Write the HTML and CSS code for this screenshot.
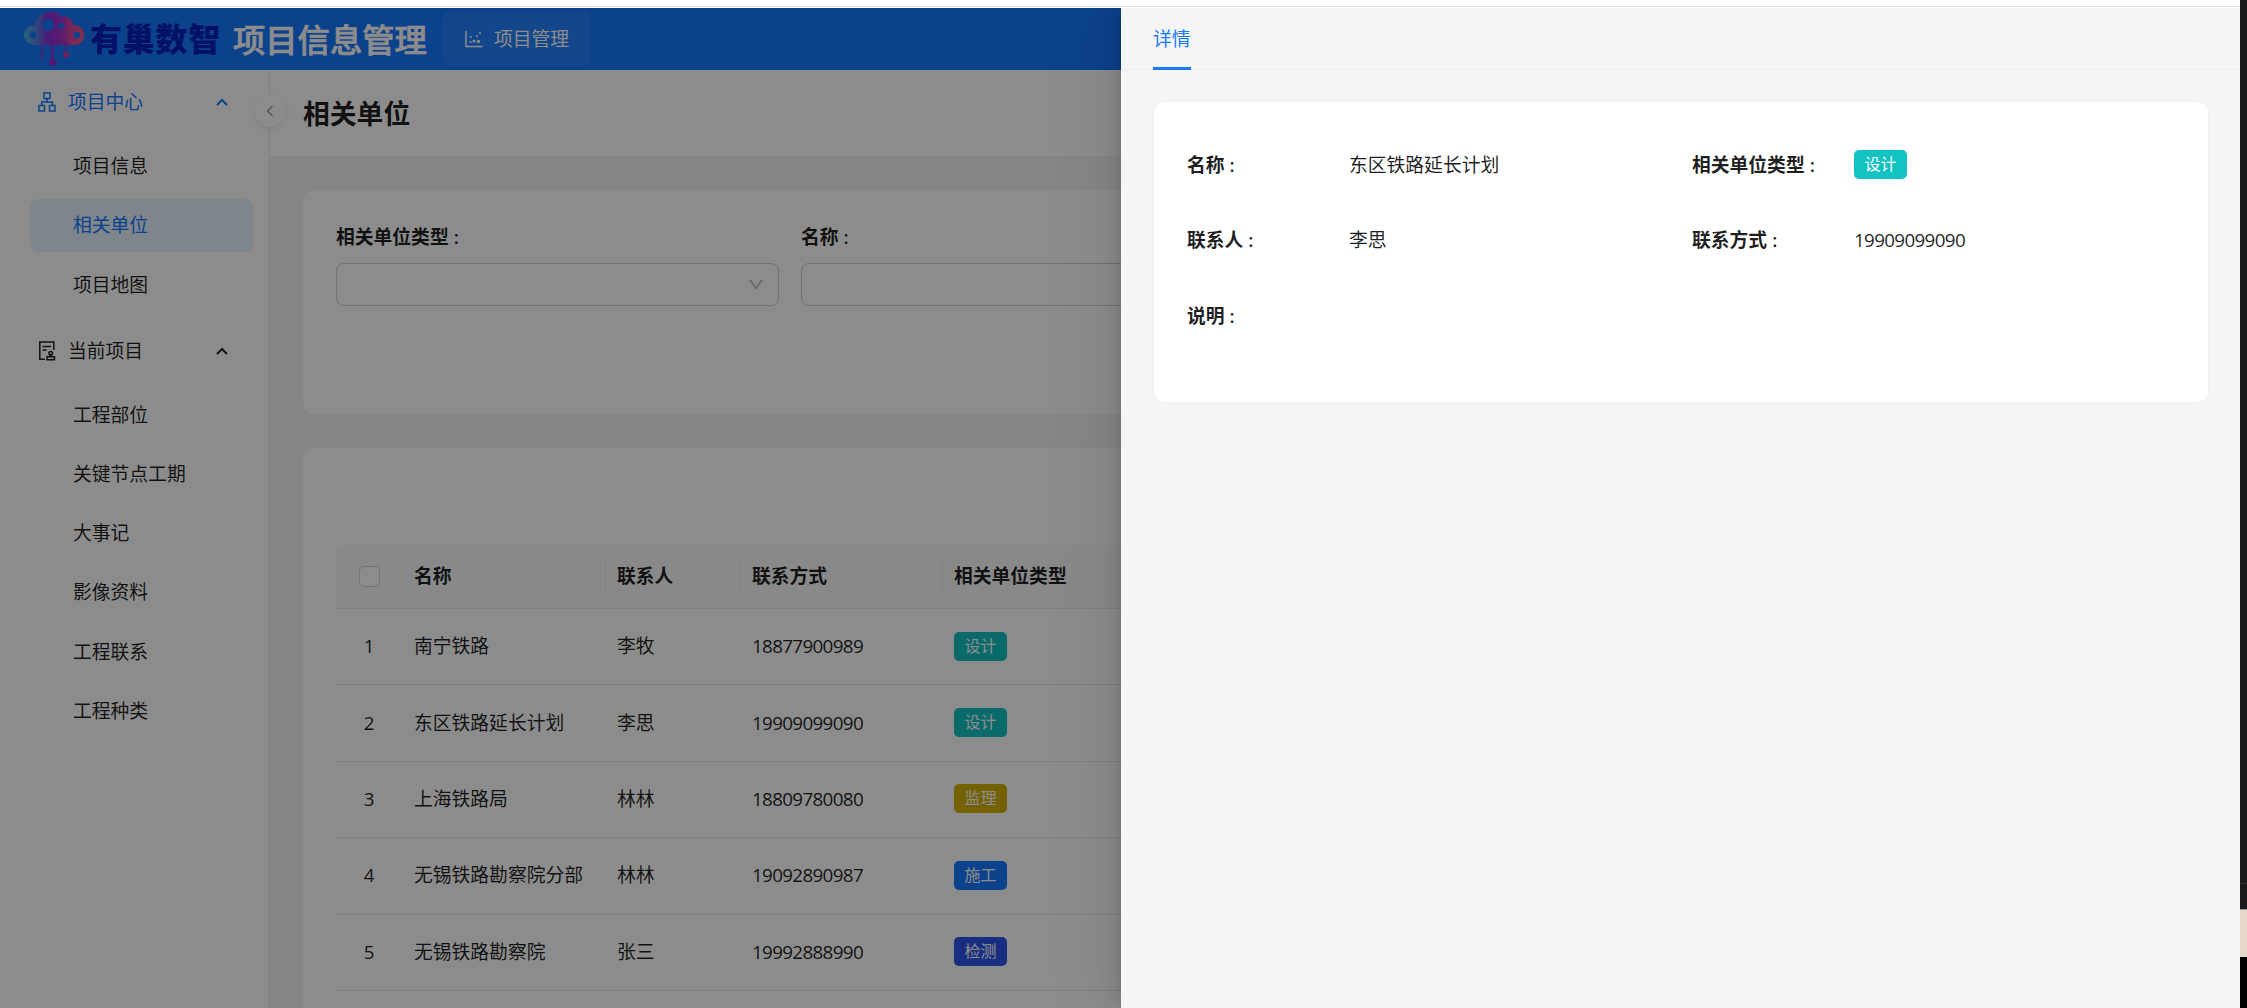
FILE: index.html
```html
<!DOCTYPE html>
<html lang="zh-CN">
<head>
    <meta charset="UTF-8">
    <meta name="viewport" content="width=device-width, initial-scale=1.0">
    <title>项目信息管理</title>
    <link rel="stylesheet" href="styles.css">
</head>
<body>
    <div class="screen">
        <div class="top-strip"></div>
        <div class="app">
            <header class="header">
                <svg class="logo" viewBox="0 0 60 54">
                    <defs>
                        <linearGradient id="cloud" x1="0" x2="1" y1="0" y2="0">
                            <stop offset="0" stop-color="#45b4e0"/>
                            <stop offset="0.22" stop-color="#5a80e0"/>
                            <stop offset="0.4" stop-color="#8a30d8"/>
                            <stop offset="0.62" stop-color="#a832cc"/>
                            <stop offset="0.8" stop-color="#dc48a4"/>
                            <stop offset="1" stop-color="#ff5578"/>
                        </linearGradient>
                    </defs>
                    <path fill="url(#cloud)" fill-rule="evenodd" d="M11 13C13 5 18 0 26 0c6 0 10 2 12 5 5-2 10 1 11 8 6 0 11 4 11 10s-4 10-10 10H11C5 33 0 29 0 23s5-10 11-10zM24 7a6 6 0 1 0 .1 0zM37 11a3 3 0 1 0 .1 0zM9 19.500a3.500 3.500 0 1 0 .1 0zM53 19.500a3.500 3.500 0 1 0 .1 0z"/>
                    <path stroke="#9430cc" stroke-width="1.500" fill="none" d="M18 32v14M42 30v12"/>
                    <path stroke="#9430cc" stroke-width="2.500" fill="none" d="M28.500 30v19"/>
                    <circle cx="18" cy="46" r="1.500" fill="#7a45c8"/>
                    <circle cx="28.500" cy="50.500" r="3.500" fill="#9c28cc"/>
                    <circle cx="42" cy="43" r="3" fill="#cc40a4"/>
                </svg>
                <span class="brand">有巢数智</span>
                <h1 class="app-title">项目信息管理</h1>
                <a class="nav-item">
                    <svg class="nav-icon" viewBox="0 0 18 18">
                        <path d="M1 1v15.500h16.500" fill="none" stroke="#fff" stroke-width="1.500"/>
                        <g fill="#fff">
                            <circle cx="6" cy="7" r="1"/><circle cx="12" cy="6" r="1"/><circle cx="15" cy="3" r="1"/>
                            <circle cx="5.500" cy="12" r="1"/><circle cx="9" cy="11" r="1.500"/><circle cx="13.500" cy="11.500" r="1.700"/>
                        </g>
                    </svg>
                    项目管理
                </a>
            </header>

            <div class="layout">
                <aside class="sidebar">
                    <div class="menu-title active">
                        <svg class="menu-icon" viewBox="0 0 18 20" fill="none" stroke="currentColor" stroke-width="1.500">
                            <path d="M6 1h6v5.500H6zM1 13.500h5.500V19H1zM11.500 13.500H17V19h-5.500zM9 6.500V10M3.700 13.500V10h10.600v3.500"/>
                        </svg>
                        <span>项目中心</span>
                        <svg class="arrow" viewBox="0 0 12 8"><path d="M1 7l5-5 5 5" fill="none" stroke="currentColor" stroke-width="2"/></svg>
                    </div>
                    <ul class="menu">
                        <li>项目信息</li>
                        <li class="selected">相关单位</li>
                        <li>项目地图</li>
                    </ul>
                    <div class="menu-title">
                        <svg class="menu-icon" viewBox="0 0 18 20" fill="none" stroke="currentColor" stroke-width="1.500">
                            <path d="M7 18.300H1.800V1h14v8M4.500 5.500h8.500M4.500 9h4"/>
                            <circle cx="12.700" cy="12.200" r="1.800"/>
                            <path d="M12.700 14v1.500M9 15.700h7.500v3H9z"/>
                        </svg>
                        <span>当前项目</span>
                        <svg class="arrow" viewBox="0 0 12 8"><path d="M1 7l5-5 5 5" fill="none" stroke="currentColor" stroke-width="2"/></svg>
                    </div>
                    <ul class="menu">
                        <li>工程部位</li>
                        <li>关键节点工期</li>
                        <li>大事记</li>
                        <li>影像资料</li>
                        <li>工程联系</li>
                        <li>工程种类</li>
                    </ul>
                    <div class="collapse">
                        <svg viewBox="0 0 8 12"><path d="M6.500 1L1.500 6l5 5" fill="none" stroke="#999" stroke-width="1.500"/></svg>
                    </div>
                </aside>

                <main class="main">
                    <div class="page-header"><h2>相关单位</h2></div>
                    <div class="content">
                        <section class="card search">
                            <div class="field">
                                <label>相关单位类型<i>:</i></label>
                                <div class="input">
                                    <svg viewBox="0 0 14 11"><path d="M1 1L7 9.500 13 1" fill="none" stroke="#b8b8b8" stroke-width="1.400"/></svg>
                                </div>
                            </div>
                            <div class="field">
                                <label>名称<i>:</i></label>
                                <div class="input"></div>
                            </div>
                            <div class="field"></div>
                            <div class="field"></div>
                        </section>

                        <section class="card list">
                            <div class="table">
                                <div class="row head">
                                    <div class="cell"><span class="checkbox"></span></div>
                                    <div class="cell">名称</div>
                                    <div class="cell">联系人</div>
                                    <div class="cell">联系方式</div>
                                    <div class="cell">相关单位类型</div>
                                </div>
                                <div class="row">
                                    <div class="cell">1</div>
                                    <div class="cell">南宁铁路</div>
                                    <div class="cell">李牧</div>
                                    <div class="cell num">18877900989</div>
                                    <div class="cell"><span class="tag cyan">设计</span></div>
                                </div>
                                <div class="row">
                                    <div class="cell">2</div>
                                    <div class="cell">东区铁路延长计划</div>
                                    <div class="cell">李思</div>
                                    <div class="cell num">19909099090</div>
                                    <div class="cell"><span class="tag cyan">设计</span></div>
                                </div>
                                <div class="row">
                                    <div class="cell">3</div>
                                    <div class="cell">上海铁路局</div>
                                    <div class="cell">林林</div>
                                    <div class="cell num">18809780080</div>
                                    <div class="cell"><span class="tag gold">监理</span></div>
                                </div>
                                <div class="row">
                                    <div class="cell">4</div>
                                    <div class="cell">无锡铁路勘察院分部</div>
                                    <div class="cell">林林</div>
                                    <div class="cell num">19092890987</div>
                                    <div class="cell"><span class="tag blue">施工</span></div>
                                </div>
                                <div class="row">
                                    <div class="cell">5</div>
                                    <div class="cell">无锡铁路勘察院</div>
                                    <div class="cell">张三</div>
                                    <div class="cell num">19992888990</div>
                                    <div class="cell"><span class="tag geekblue">检测</span></div>
                                </div>
                            </div>
                        </section>
                    </div>
                </main>
            </div>

            <div class="mask"></div>
            <div class="drawer">
                <div class="tabs"><div class="tab">详情</div></div>
                <div class="detail">
                    <div class="item"><label>名称<i>:</i></label><span>东区铁路延长计划</span></div>
                    <div class="item"><label>相关单位类型<i>:</i></label><span class="tag cyan">设计</span></div>
                    <div class="item"><label>联系人<i>:</i></label><span>李思</span></div>
                    <div class="item"><label>联系方式<i>:</i></label><span class="num">19909099090</span></div>
                    <div class="item"><label>说明<i>:</i></label><span></span></div>
                </div>
            </div>
        </div>
    </div>
    <div class="edge">
        <div class="edge-dark"></div>
        <div class="edge-mid"></div>
        <div class="edge-light"></div>
    </div>
</body>
</html>
```

FILE: styles.css
```css
* {
    margin: 0;
    padding: 0;
    box-sizing: border-box;
}

body {
    display: flex;
    height: 100vh;
    overflow: hidden;
    font-family: "Open Sans", "Noto Sans CJK SC", sans-serif;
    font-size: 18.8px;
    line-height: 30px;
    color: rgba(0, 0, 0, 0.88);
    background: #fff;
}

ul {
    list-style: none;
}

i {
    font-style: normal;
    margin-left: 5px;
}

.screen {
    flex: 1;
    display: flex;
    flex-direction: column;
}

.top-strip {
    height: 8px;
    flex: none;
    background: linear-gradient(#fff 6px, #e0e0e0 6px, #e0e0e0 7px, #fff 7px);
}

.app {
    flex: 1;
    position: relative;
    overflow: hidden;
    display: flex;
    flex-direction: column;
}

/* header */
.header {
    height: 62px;
    flex: none;
    display: flex;
    align-items: center;
    padding-left: 24px;
    background: #1677ff;
    color: #fff;
}

.logo {
    width: 60px;
    height: 54px;
    margin-right: 6px;
}

.brand {
    width: 143px;
    font-size: 32px;
    font-weight: 900;
    letter-spacing: 0.8px;
    color: #0420b8;
    white-space: nowrap;
}

.app-title {
    width: 210px;
    font-size: 32.3px;
    font-weight: 500;
    -webkit-text-stroke: 0.7px #fff;
    white-space: nowrap;
}

.nav-item {
    width: 148px;
    height: 54px;
    display: flex;
    align-items: center;
    padding-left: 22px;
    gap: 11px;
    border-radius: 6px;
    background: rgba(255, 255, 255, 0.07);
    white-space: nowrap;
}

.nav-icon {
    width: 18px;
    height: 18px;
}

/* sidebar */
.layout {
    flex: 1;
    min-height: 0;
    display: flex;
}

.sidebar {
    position: relative;
    width: 270px;
    flex: none;
    padding: 3px 16px 0 30px;
    border-right: 1px solid #ececec;
    background: #fff;
}

.menu-title {
    height: 58px;
    display: flex;
    align-items: center;
    padding: 0 25px 0 8px;
}

.menu-title.active {
    color: #1677ff;
}

.menu-icon {
    width: 18px;
    height: 20px;
    margin-right: 12px;
}

.arrow {
    width: 12px;
    height: 8px;
    margin-left: auto;
}

.menu {
    display: flex;
    flex-direction: column;
    gap: 6.3px;
    padding: 9px 0 10px;
}

.menu li {
    height: 53px;
    padding-left: 43px;
    line-height: 53px;
    border-radius: 9px;
}

.menu .selected {
    background: #e6f4ff;
    color: #1677ff;
}

.collapse {
    position: absolute;
    top: 25px;
    right: -17px;
    width: 32px;
    height: 32px;
    display: flex;
    align-items: center;
    justify-content: center;
    border-radius: 50%;
    background: #fff;
    box-shadow: 0 2px 8px rgba(0, 0, 0, 0.05), 0 1px 2px rgba(0, 0, 0, 0.05);
}

.collapse svg {
    width: 8px;
    height: 12px;
}

/* main area */
.main {
    flex: 1;
    background: #f5f5f5;
}

.page-header {
    height: 86px;
    display: flex;
    align-items: center;
    padding: 2px 0 0 33px;
    background: #fff;
}

.page-header h2 {
    font-size: 26.8px;
    font-weight: 600;
}

.content {
    padding: 34px 33px 0;
}

.card {
    border-radius: 10px;
    background: #fff;
    box-shadow: 0 0 2px rgba(0, 0, 0, 0.06);
}

.search {
    height: 224px;
    display: grid;
    grid-template-columns: repeat(4, 443px);
    column-gap: 22px;
    padding: 32px 33px 0;
    overflow: hidden;
}

.field label {
    display: block;
    height: 41px;
    font-weight: 600;
}

.input {
    height: 43px;
    display: flex;
    align-items: center;
    justify-content: flex-end;
    padding-right: 15px;
    border: 1px solid #d0d0d0;
    border-radius: 8px;
}

.input svg {
    width: 14px;
    height: 11px;
}

.list {
    height: 700px;
    margin-top: 34px;
    padding: 97px 33px 0;
}

.row {
    display: grid;
    grid-template-columns: 66px 203px 135px 202px 1fr;
    align-items: center;
    height: 76.4px;
    padding-bottom: 1px;
    border-bottom: 1px solid #e8e8e8;
}

.row.head {
    height: 64px;
    font-weight: 600;
    background: #fafafa;
    border-radius: 10px 10px 0 0;
}

.cell {
    padding-left: 12px;
    white-space: nowrap;
}

.cell:first-child {
    display: flex;
    justify-content: center;
    padding: 0;
}

.head .cell:nth-child(n+3) {
    box-shadow: inset 1px 0 #ededed;
}

.checkbox {
    width: 21px;
    height: 21px;
    border: 1px solid #d4d4d4;
    border-radius: 5px;
    background: #fff;
}

.num {
    letter-spacing: -0.65px;
}

.tag {
    display: block;
    width: 53px;
    height: 29px;
    border-radius: 5px;
    font-size: 16px;
    line-height: 29px;
    text-align: center;
    color: #fff;
}

.cyan { background: #13c2c2; }
.gold { background: #d4b106; }
.blue { background: #1677ff; }
.geekblue { background: #2f54eb; }

/* drawer */
.mask {
    position: absolute;
    inset: 0;
    background: rgba(0, 0, 0, 0.45);
}

.drawer {
    position: absolute;
    top: 0;
    right: 0;
    bottom: 0;
    width: 1119px;
    background: #f5f5f5;
    box-shadow: -8px 0 21px rgba(0, 0, 0, 0.08), -4px 0 8px -5px rgba(0, 0, 0, 0.12), -12px 0 64px 10px rgba(0, 0, 0, 0.05);
}

.tabs {
    height: 62px;
    display: flex;
    padding-left: 32px;
    box-shadow: inset 0 -1px #efefef;
}

.tab {
    width: 38px;
    line-height: 62px;
    color: #1677ff;
    border-bottom: 3px solid #1677ff;
    white-space: nowrap;
}

.detail {
    height: 300px;
    display: grid;
    grid-template-columns: 505px 1fr;
    grid-auto-rows: 75.5px;
    margin: 32px 32px 0 33px;
    padding: 25px 33px 0;
    border-radius: 10px;
    background: #fff;
    box-shadow: 0 0 2px rgba(0, 0, 0, 0.08);
}

.item {
    display: flex;
    align-items: center;
}

.item label {
    width: 162px;
    font-weight: 600;
}

/* strip on the right of the window */
.edge {
    width: 7px;
    display: flex;
    flex-direction: column;
    background: #000;
}

.edge-dark {
    height: 884px;
    background: #1a1a1a;
    border-bottom: 1px solid #333;
}

.edge-mid {
    height: 26px;
    background: #1a1a1a;
    border-bottom: 1px solid #999;
}

.edge-light {
    height: 47px;
    background: #e6d9c9;
}
```
